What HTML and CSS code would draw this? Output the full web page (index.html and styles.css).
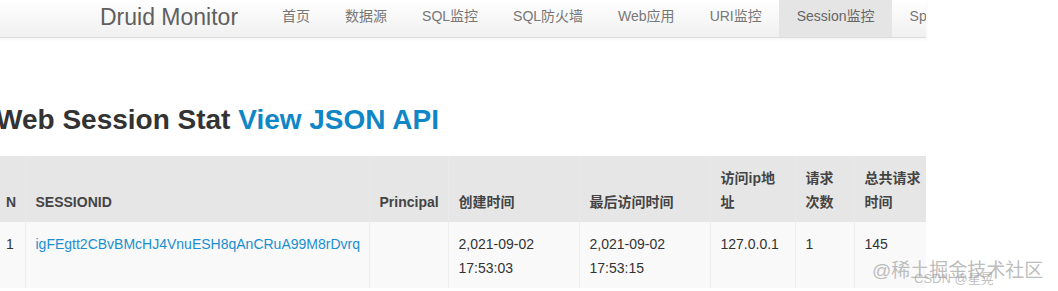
FILE: index.html
```html
<!DOCTYPE html>
<html lang="zh">
<head>
<meta charset="utf-8">
<title>Druid Monitor</title>
<link rel="stylesheet" href="styles.css">
</head>
<body>
<div class="page">
  <div class="navbar">
    <a class="brand" href="#">Druid Monitor</a>
    <ul class="nav">
      <li><a href="#">首页</a></li>
      <li><a href="#">数据源</a></li>
      <li><a href="#">SQL监控</a></li>
      <li><a href="#">SQL防火墙</a></li>
      <li><a href="#">Web应用</a></li>
      <li><a href="#">URI监控</a></li>
      <li class="active"><a href="#">Session监控</a></li>
      <li><a href="#">Spring监控</a></li>
    </ul>
  </div>
  <h2 class="title">Web Session Stat <a href="#">View JSON API</a></h2>
  <table class="grid">
    <colgroup>
      <col class="c-n"><col class="c-id"><col class="c-pr"><col class="c-ct"><col class="c-lt"><col class="c-ip"><col class="c-rc"><col class="c-tt">
    </colgroup>
    <thead>
      <tr>
        <th>N</th>
        <th>SESSIONID</th>
        <th>Principal</th>
        <th>创建时间</th>
        <th>最后访问时间</th>
        <th>访问ip地址</th>
        <th>请求次数</th>
        <th>总共请求时间</th>
      </tr>
    </thead>
    <tbody>
      <tr>
        <td>1</td>
        <td><a href="#">igFEgtt2CBvBMcHJ4VnuESH8qAnCRuA99M8rDvrq</a></td>
        <td></td>
        <td>2,021-09-02 17:53:03</td>
        <td>2,021-09-02 17:53:15</td>
        <td>127.0.0.1</td>
        <td>1</td>
        <td>145</td>
      </tr>
    </tbody>
  </table>
</div>
<div class="watermark">@稀土掘金技术社区<span class="wm2">CSDN @星晃</span></div>
</body>
</html>
```
FILE: styles.css
```css
html, body {
  margin: 0;
  padding: 0;
  background: #fff;
}
body {
  font-family: "Liberation Sans", Arial, "Noto Sans CJK SC", sans-serif;
  font-size: 14px;
  line-height: 24px;
  color: #333;
  width: 1058px;
  height: 291px;
  overflow: hidden;
  position: relative;
}
a { text-decoration: none; }
.page {
  width: 930px;
  margin-left: -4px;
}
.navbar {
  display: flex;
  align-items: center;
  height: 37px;
  padding-left: 104px;
  background: linear-gradient(#ffffff, #f0f0f0);
  border-bottom: 1px solid #dcdcdc;
  box-shadow: 0 1px 4px rgba(0,0,0,0.06);
  overflow: hidden;
}
.brand {
  font-size: 23px;
  color: #5f5f5f;
  margin-right: 6px;
  white-space: nowrap;
  line-height: 37px;
  margin-top: -3px;
}
.nav {
  display: flex;
  list-style: none;
  margin: 0;
  padding: 0 0 0 20.5px;
  height: 37px;
}
.nav li {
  display: flex;
}
.nav a {
  display: block;
  padding: 0 17.5px;
  line-height: 33px;
  color: #777;
  white-space: nowrap;
}
.nav li.active a {
  background: #e5e5e5;
  color: #666;
  height: 37px;
}
.title {
  margin: 64px 0 18px 0;
  font-size: 28px;
  line-height: 36px;
  font-weight: bold;
  color: #333;
  white-space: nowrap;
}
.title a {
  color: #0f86c6;
}
.grid {
  border-collapse: collapse;
  table-layout: fixed;
  width: 930px;
}
.c-n { width: 29px; }
.c-id { width: 344px; }
.c-pr { width: 79px; }
.c-ct { width: 131px; }
.c-lt { width: 131px; }
.c-ip { width: 85px; }
.c-rc { width: 59px; }
.c-tt { width: 72px; }
.grid th, .grid td {
  text-align: left;
  vertical-align: top;
  padding: 10px 10px 8px 10px;
  border-left: 1px solid #eeeeee;
}
.grid th:first-child, .grid td:first-child { border-left: none; }
.grid th:last-child, .grid td:last-child { padding-right: 0; }
.grid thead tr {
  background: #e6e6e6;
}
.grid th {
  vertical-align: bottom;
  font-weight: bold;
  color: #444;
  padding-top: 10px;
  padding-bottom: 8px;
  border-left-color: #e9e9e9;
}
.grid tbody tr {
  background: #f9f9f9;
}
.grid td {
  height: 46px;
  color: #333;
}
.grid td a {
  color: #1a8fd0;
}
.watermark {
  position: absolute;
  left: 872px;
  top: 259px;
  font-size: 19px;
  line-height: 24px;
  color: #bdbdbd;
  white-space: nowrap;
}
.wm2 {
  position: absolute;
  left: 42px;
  top: 8px;
  font-size: 13px;
  color: rgba(150,150,150,0.6);
}
```
